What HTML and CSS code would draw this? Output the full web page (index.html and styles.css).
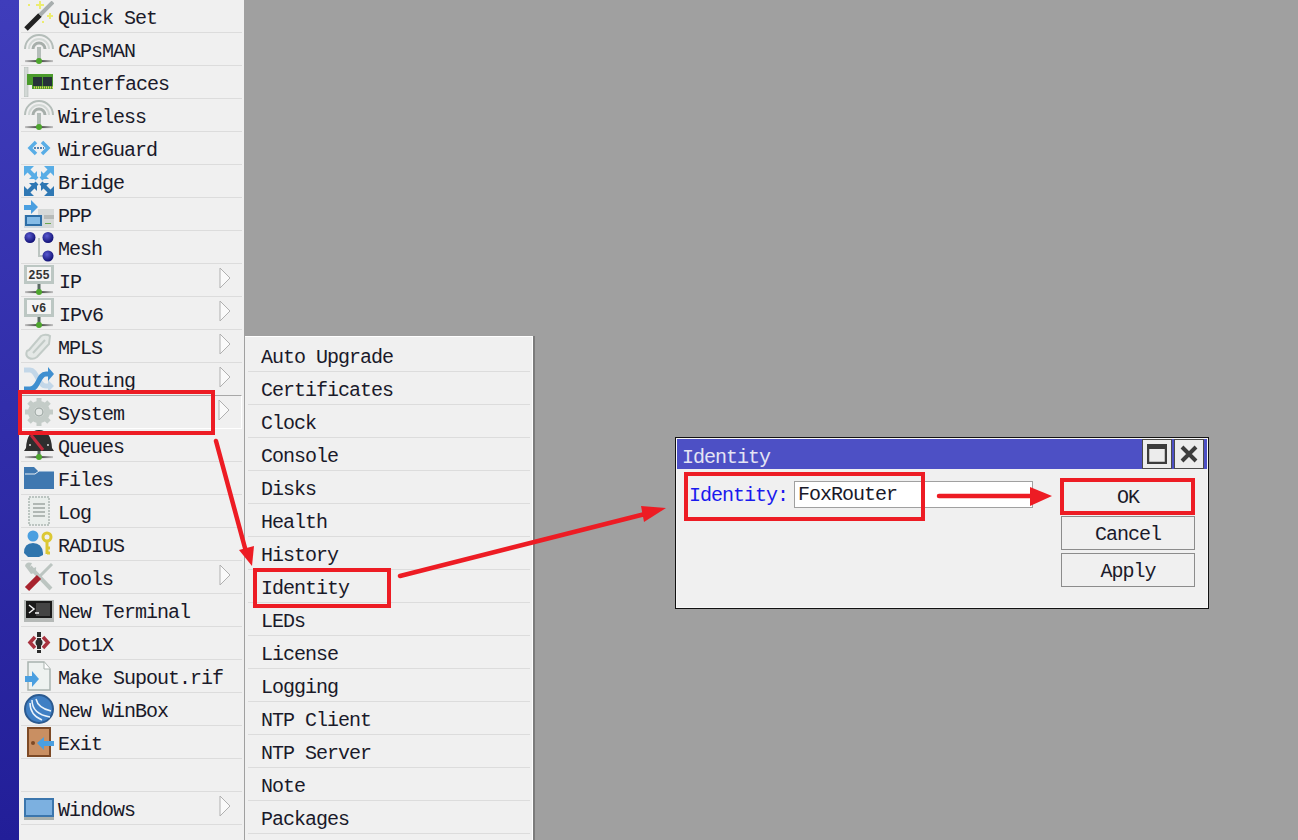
FILE: index.html
```html
<!DOCTYPE html>
<html lang="en">

<head>
    <meta charset="UTF-8">
    <title>WinBox Identity</title>
    <link rel="stylesheet" href="styles.css">
</head>

<body>
    <div class="strip"></div>

    <!-- main menu -->
    <div class="menu">
        <div class="row">
            <svg class="icon" viewBox="0 0 30 30"><path d="M2 28L16 14" stroke="#222" stroke-width="5"/><path d="M16 14L29 1" stroke="#a8aeae" stroke-width="4"/><path d="M16 0v8M12 4h8M26 12v6M23 15h6" stroke="#ecec70" stroke-width="2"/><path d="M4 4h2M18 21h2" stroke="#ecec70" stroke-width="2"/></svg>
            <span>Quick Set</span>
        </div>
        <div class="row">
            <svg class="icon" viewBox="0 0 30 30"><use href="#antenna"/></svg>
            <span>CAPsMAN</span>
        </div>
        <div class="row">
            <svg class="icon" viewBox="0 0 30 30"><rect x="0" y="0" width="4" height="30" fill="#d2d8d5" stroke="#a8b0ac" stroke-width=".5"/><path d="M3 7h26v15H8v-4H3z" fill="#4b9b2c"/><rect x="9" y="10" width="9" height="9" fill="#263238"/><rect x="19" y="10" width="9" height="9" fill="#263238"/><path d="M10 20.500h19" stroke="#e3d35a" stroke-width="2" stroke-dasharray="1 1"/></svg>
            <span class="shift">Interfaces</span>
        </div>
        <div class="row">
            <svg class="icon" viewBox="0 0 30 30"><use href="#antenna"/></svg>
            <span>Wireless</span>
        </div>
        <div class="row">
            <svg class="icon" viewBox="0 0 30 30"><path d="M12 9l-6 6 6 6M18 9l6 6-6 6" fill="none" stroke="#58ade6" stroke-width="3.500"/><path d="M10 15h10" stroke="#1f5f9f" stroke-width="1.500" stroke-dasharray="2 1"/></svg>
            <span>WireGuard</span>
        </div>
        <div class="row">
            <svg class="icon" viewBox="0 0 30 30">
                <g fill="#58ade6" stroke="#58ade6">
                    <path d="M2 2L13 13" stroke-width="4"/><path d="M28 2L17 13" stroke-width="4"/>
                    <path d="M0 0h10L0 10zM13 13V5L5 13zM30 0H20L30 10zM17 13V5L25 13z" stroke="none"/>
                </g>
                <g fill="#2f78b4" stroke="#2f78b4">
                    <path d="M2 28L13 17" stroke-width="4"/><path d="M28 28L17 17" stroke-width="4"/>
                    <path d="M0 30h10L0 20zM13 17v8L5 17zM30 30H20L30 20zM17 17v8L25 17z" stroke="none"/>
                </g>
            </svg>
            <span>Bridge</span>
        </div>
        <div class="row">
            <svg class="icon" viewBox="0 0 30 30"><path d="M0 6h7V1l7 7-7 7v-4H0z" fill="#4a9fe0"/><rect x="14" y="10" width="16" height="19" fill="#d6d9d8"/><rect x="20" y="16" width="10" height="4" fill="#b6bab8"/><rect x="21" y="24" width="6" height="1" fill="#6aa84f"/><rect x="0" y="16" width="19" height="13" fill="#cfd8df"/><rect x="1" y="16" width="17" height="11" fill="#2d6ea6"/><rect x="3" y="18" width="13" height="7" fill="#86bce6"/></svg>
            <span>PPP</span>
        </div>
        <div class="row">
            <svg class="icon" viewBox="0 0 30 30"><path d="M15 6v18h9" fill="none" stroke="#bcc5c1" stroke-width="2"/><circle cx="6" cy="5.500" r="5.500" fill="url(#ball)"/><circle cx="24" cy="5.500" r="5.500" fill="url(#ball)"/><circle cx="24" cy="24" r="5.500" fill="url(#ball)"/></svg>
            <span>Mesh</span>
        </div>
        <div class="row">
            <svg class="icon" viewBox="0 0 30 30"><use href="#stand"/><rect x="0" y="0" width="30" height="19" fill="#bcc7c3"/><rect x="3" y="2" width="24" height="14" fill="#f4f4f4"/><text class="icon-text" x="15" y="13.500" text-anchor="middle">255</text></svg>
            <span class="shift">IP</span>
            <svg class="more" viewBox="0 0 12 22"><path d="M1 1L11 11L1 21z" fill="#fafafa" stroke="#b0b0b0"/></svg>
        </div>
        <div class="row">
            <svg class="icon" viewBox="0 0 30 30"><use href="#stand"/><rect x="0" y="0" width="30" height="19" fill="#bcc7c3"/><rect x="3" y="2" width="24" height="14" fill="#f4f4f4"/><text class="icon-text" x="15" y="13.500" text-anchor="middle">v6</text></svg>
            <span class="shift">IPv6</span>
            <svg class="more" viewBox="0 0 12 22"><path d="M1 1L11 11L1 21z" fill="#fafafa" stroke="#b0b0b0"/></svg>
        </div>
        <div class="row">
            <svg class="icon" viewBox="0 0 30 30"><path d="M5 19L17 5q3-2 7-1l2 1-1 8-12 13q-4 3-8 1t-2-7z" fill="#e4e8e6" stroke="#c2cbc7" stroke-width="2"/><path d="M9 22L21 9" stroke="#c2cbc7" stroke-width="2"/></svg>
            <span>MPLS</span>
            <svg class="more" viewBox="0 0 12 22"><path d="M1 1L11 11L1 21z" fill="#fafafa" stroke="#b0b0b0"/></svg>
        </div>
        <div class="row">
            <svg class="icon" viewBox="0 0 30 30"><path d="M0 6h6c7 0 8 16 16 16h3" fill="none" stroke="#c3d7e8" stroke-width="5"/><path d="M24 16l6 6-6 6z" fill="#c3d7e8"/><path d="M0 25h6c9 0 8-15 16-15h3" fill="none" stroke="#3f8fd0" stroke-width="5"/><path d="M24 3l6 7-6 7z" fill="#3f8fd0"/></svg>
            <span>Routing</span>
            <svg class="more" viewBox="0 0 12 22"><path d="M1 1L11 11L1 21z" fill="#fafafa" stroke="#b0b0b0"/></svg>
        </div>
        <div class="row row-open">
            <svg class="icon" viewBox="0 0 30 30"><circle cx="15" cy="15" r="8" fill="none" stroke="#c4ccc8" stroke-width="6"/><path d="M15 1v6M15 23v6M1 15h6M23 15h6M5 5l4 4M21 21l4 4M5 25l4-4M21 9l4-4" stroke="#c4ccc8" stroke-width="5"/><circle cx="15" cy="15" r="4" fill="#e4e8e6" stroke="#a4aeaa" stroke-width="1.500"/></svg>
            <span>System</span>
            <svg class="more" viewBox="0 0 12 22"><path d="M1 1L11 11L1 21z" fill="#fafafa" stroke="#b0b0b0"/></svg>
        </div>
        <div class="row">
            <svg class="icon" viewBox="0 0 30 30"><path d="M15 26v-5" stroke="#5a6a64" stroke-width="3"/><path d="M1 27.100h28" stroke="url(#base)" stroke-width="2"/><path d="M2 18Q3 0 15 0T28 18l2 3H0z" fill="#2e2e2e"/><circle cx="6" cy="15" r="1" fill="#ddd"/><circle cx="24" cy="15" r="1" fill="#ddd"/><path d="M7 5L19 20" stroke="#c0293b" stroke-width="3"/><circle cx="15" cy="27" r="3" fill="#4ea62e"/></svg>
            <span>Queues</span>
        </div>
        <div class="row">
            <svg class="icon" viewBox="0 0 30 30"><path d="M0 4h10l4 4h16v18H0z" fill="#3f78b0"/><path d="M1 11h10l4-3h15" fill="none" stroke="#e8eef3"/></svg>
            <span>Files</span>
        </div>
        <div class="row">
            <svg class="icon" viewBox="0 0 30 30"><rect x="5" y="1" width="20" height="28" fill="#e9eeeb" stroke="#bcc5c1" stroke-width="2" stroke-dasharray="2 1"/><path d="M9 8h12M9 12h12M9 16h12M9 20h12" stroke="#b0b8b4" stroke-width="2"/></svg>
            <span>Log</span>
        </div>
        <div class="row">
            <svg class="icon" viewBox="0 0 30 30"><circle cx="9" cy="7" r="5.500" fill="#4a9fe0"/><path d="M0 24q0-10 9-10t10 10v2l-4 2H4z" fill="#2f75ad"/><circle cx="23" cy="8" r="4" fill="none" stroke="#dcc834" stroke-width="3"/><path d="M23 12v13M23 19h3M23 24h3" stroke="#dcc834" stroke-width="3"/></svg>
            <span>RADIUS</span>
        </div>
        <div class="row">
            <svg class="icon" viewBox="0 0 30 30"><path d="M6 5L27 27" stroke="#bcc5c1" stroke-width="4"/><path d="M1 4q1-5 7-3L6 5l2 2 4-2q1 6-5 7z" fill="#bcc5c1"/><path d="M28 2L14 16" stroke="#bcc5c1" stroke-width="3"/><path d="M3 27L15 15" stroke="#a8232e" stroke-width="6"/></svg>
            <span>Tools</span>
            <svg class="more" viewBox="0 0 12 22"><path d="M1 1L11 11L1 21z" fill="#fafafa" stroke="#b0b0b0"/></svg>
        </div>
        <div class="row">
            <svg class="icon" viewBox="0 0 30 30"><rect x="0" y="5" width="30" height="22" fill="#b5b9b7"/><rect x="2" y="6" width="26" height="17" fill="#1a1a1a"/><rect x="12" y="8" width="14" height="13" fill="#444"/><path d="M5 10l5 4-5 4M11 18h4" fill="none" stroke="#f4f4f4" stroke-width="1.500"/></svg>
            <span>New Terminal</span>
        </div>
        <div class="row">
            <svg class="icon" viewBox="0 0 30 30"><path d="M11 9l-5 5.500 5 5.500M19 9l5 5.500-5 5.500" fill="none" stroke="#a8323f" stroke-width="3.500"/><path d="M15 4v21" stroke="#2b2b2b" stroke-width="4" stroke-dasharray="5 1"/><circle cx="15" cy="14.500" r="3.500" fill="#2b2b2b"/></svg>
            <span>Dot1X</span>
        </div>
        <div class="row">
            <svg class="icon" viewBox="0 0 30 30"><path d="M4 1h16l6 7v21H4z" fill="#eef2f0" stroke="#a8b2ae" stroke-width="1.500"/><path d="M20 1v7h6" fill="#fff" stroke="#a8b2ae"/><path d="M1 15h7v-5l7 8-7 8v-5H1z" fill="#4a9fe0"/></svg>
            <span>Make Supout.rif</span>
        </div>
        <div class="row">
            <svg class="icon" viewBox="0 0 30 30"><circle cx="15" cy="15" r="14" fill="#3f7fc4" stroke="#2b5a90" stroke-width="2"/><path d="M8 6q0 14 18 17M12 5q2 9 15 12M6 9q0 12 12 17" fill="none" stroke="#eaf3fb" stroke-width="1.500"/></svg>
            <span>New WinBox</span>
        </div>
        <div class="row">
            <svg class="icon" viewBox="0 0 30 30"><rect x="3" y="0" width="24" height="30" fill="#7d4a26"/><rect x="5" y="2" width="20" height="26" fill="#c98f62"/><circle cx="9" cy="16" r="2" fill="#7d4a26"/><path d="M13 16l7-6v4h10v5H20v4z" fill="#4a9fe0"/></svg>
            <span>Exit</span>
        </div>
        <div class="row"></div>
        <div class="row">
            <svg class="icon" viewBox="0 0 30 30"><rect x="0" y="5" width="30" height="22" fill="#a9b0ad"/><rect x="0" y="5" width="30" height="19" fill="#3b76ad"/><rect x="2" y="7" width="26" height="15" fill="#7cb0e0"/></svg>
            <span>Windows</span>
            <svg class="more" viewBox="0 0 12 22"><path d="M1 1L11 11L1 21z" fill="#fafafa" stroke="#b0b0b0"/></svg>
        </div>
    </div>

    <div class="desktop"></div>

    <!-- system submenu -->
    <div class="submenu">
        <div class="row"><span>Auto Upgrade</span></div>
        <div class="row"><span>Certificates</span></div>
        <div class="row"><span>Clock</span></div>
        <div class="row"><span>Console</span></div>
        <div class="row"><span>Disks</span></div>
        <div class="row"><span>Health</span></div>
        <div class="row"><span>History</span></div>
        <div class="row"><span>Identity</span></div>
        <div class="row"><span>LEDs</span></div>
        <div class="row"><span>License</span></div>
        <div class="row"><span>Logging</span></div>
        <div class="row"><span>NTP Client</span></div>
        <div class="row"><span>NTP Server</span></div>
        <div class="row"><span>Note</span></div>
        <div class="row"><span>Packages</span></div>
    </div>

    <!-- identity window -->
    <div class="window">
        <div class="titlebar">
            <span class="title">Identity</span>
            <div class="winbtn">
                <svg viewBox="0 0 20 20"><rect x="1" y="1" width="18" height="18" fill="none" stroke="#3c3c3c" stroke-width="2.500"/><path d="M1 3.500h18" stroke="#3c3c3c" stroke-width="3"/></svg>
            </div>
            <div class="winbtn">
                <svg viewBox="0 0 20 20"><path d="M3 3L17 17M17 3L3 17" stroke="#3c3c3c" stroke-width="4"/></svg>
            </div>
        </div>
        <div class="winbody">
            <div class="field">
                <span class="label">Identity:</span>
                <div class="input">FoxRouter</div>
            </div>
            <div class="buttons">
                <div class="btn">OK</div>
                <div class="btn">Cancel</div>
                <div class="btn">Apply</div>
            </div>
        </div>
    </div>

    <!-- red annotations -->
    <svg class="marks" viewBox="0 0 1298 840">
        <g fill="none" stroke="#ed1c24" stroke-width="4">
            <rect x="20" y="392" width="193" height="41"/>
            <rect x="255" y="570" width="134" height="36"/>
            <rect x="686" y="474" width="237" height="45"/>
            <rect x="1062" y="480" width="131" height="33"/>
        </g>
        <g stroke="#ed1c24" stroke-width="4.500" stroke-linecap="round">
            <path d="M216 441L245 548"/>
            <path d="M400 576L645 514"/>
            <path d="M939 496L1032 496"/>
        </g>
        <g fill="#ed1c24">
            <path d="M239 550L254 546L252 566z"/>
            <path d="M666 508L641 506L644 522z"/>
            <path d="M1052 496L1030 487L1030 506z"/>
        </g>
    </svg>

    <!-- shared icon parts -->
    <svg class="defs">
        <defs>
            <radialGradient id="ball" cx="0.4" cy="0.35" r="0.7">
                <stop offset="0" stop-color="#5a5ad0"/>
                <stop offset="1" stop-color="#0c0c70"/>
            </radialGradient>
            <linearGradient id="base" gradientUnits="userSpaceOnUse" x1="0" y1="0" x2="30" y2="0">
                <stop offset="0" stop-color="#ccc"/>
                <stop offset="0.5" stop-color="#333"/>
                <stop offset="1" stop-color="#ccc"/>
            </linearGradient>
            <g id="stand">
                <path d="M15 18v9" stroke="#5a6a64" stroke-width="3"/>
                <path d="M1 27.100h28" stroke="url(#base)" stroke-width="2"/>
                <circle cx="15" cy="27" r="3" fill="#4ea62e"/>
            </g>
            <g id="antenna">
                <path d="M15 13v13" stroke="#b4bdb9" stroke-width="4"/>
                <path d="M1 27.100h28" stroke="url(#base)" stroke-width="2"/>
                <circle cx="15" cy="27" r="3" fill="#4ea62e"/>
                <path d="M1 15A14 14 0 0 1 29 15" fill="none" stroke="#b4bdb9" stroke-width="2"/>
                <path d="M5 15A10 10 0 0 1 25 15" fill="none" stroke="#d2d8d5" stroke-width="2"/>
                <path d="M9 15A6 6 0 0 1 21 15" fill="none" stroke="#a6aeaa" stroke-width="3"/>
            </g>
        </defs>
    </svg>
</body>

</html>
```

FILE: styles.css
```css
* {
    margin: 0;
    padding: 0;
    box-sizing: border-box;
}

body {
    display: flex;
    position: relative;
    height: 840px;
    overflow: hidden;
    background-color: #a0a0a0;
    font-family: "Liberation Mono", monospace;
    font-size: 20px;
    letter-spacing: -1px;
    color: #1a1a2a;
}

.strip {
    width: 19px;
    background: linear-gradient(#3f3dbb, #221e98);
}

.menu {
    width: 225px;
    background-color: #f0f0f0;
    padding: 0 2px;
}

.desktop {
    flex: 1;
}

.row {
    display: flex;
    align-items: center;
    height: 33px;
    border-bottom: 1px solid #dcdcdc;
}

.row span {
    padding-top: 5px;
}

.icon {
    width: 30px;
    height: 30px;
    margin: 0 4px 0 3px;
    flex-shrink: 0;
}

.icon-text {
    font-family: "Liberation Mono", monospace;
    font-size: 12px;
    font-weight: bold;
    letter-spacing: 0;
    fill: #333;
}

.shift {
    margin-left: 1px;
}

.more {
    width: 12px;
    height: 22px;
    margin-left: auto;
    margin-right: 11px;
    margin-top: -4px;
}

.row-open {
    border-top: 1px solid #a8a8a8;
    border-right: 1px solid #fff;
    border-bottom-color: #fff;
    margin-top: -1px;
    height: 34px;
}

.submenu {
    position: absolute;
    left: 245px;
    top: 336px;
    width: 288px;
    height: 520px;
    padding: 2px 2px 2px 3px;
    background-color: #f0f0f0;
    border-top: 1px solid #fff;
    border-right: 1px solid #fff;
    box-shadow: 2px 0 0 #7c7c7c;
}

.submenu .row {
    padding-left: 13px;
}

.window {
    position: absolute;
    left: 675px;
    top: 437px;
    width: 534px;
    height: 172px;
    display: flex;
    flex-direction: column;
    background-color: #f0f0f0;
    border: 1px solid #111;
    box-shadow: inset 0 0 0 1px #f8f8f8;
    padding: 1px;
}

.titlebar {
    display: flex;
    align-items: center;
    height: 30px;
    padding-right: 3px;
    gap: 2px;
    background-color: #4d50c5;
}

.title {
    flex: 1;
    padding: 7px 0 0 5px;
    color: #e4e4f4;
}

.winbtn {
    display: flex;
    align-items: center;
    justify-content: center;
    width: 30px;
    height: 30px;
    background-color: #ececec;
    border: 1px solid #4a4a4a;
}

.winbtn svg {
    width: 20px;
    height: 20px;
}

.winbody {
    display: flex;
    justify-content: space-between;
    padding: 11px 12px 0 12px;
}

.field {
    display: flex;
    align-items: center;
    gap: 6px;
    height: 28px;
}

.label {
    color: #1a1aee;
    padding-top: 2px;
}

.input {
    width: 239px;
    height: 27px;
    padding: 0 3px;
    line-height: 26px;
    background-color: #fff;
    border: 1px solid #a0a0a0;
}

.buttons {
    display: flex;
    flex-direction: column;
    gap: 3px;
    margin-top: -1px;
}

.btn {
    width: 134px;
    height: 34px;
    line-height: 35px;
    text-align: center;
    background-color: #f0f0f0;
    border: 1px solid #8c8c8c;
}

.marks {
    position: absolute;
    left: 0;
    top: 0;
    width: 1298px;
    height: 840px;
}

.defs {
    position: absolute;
    width: 0;
    height: 0;
}
```
